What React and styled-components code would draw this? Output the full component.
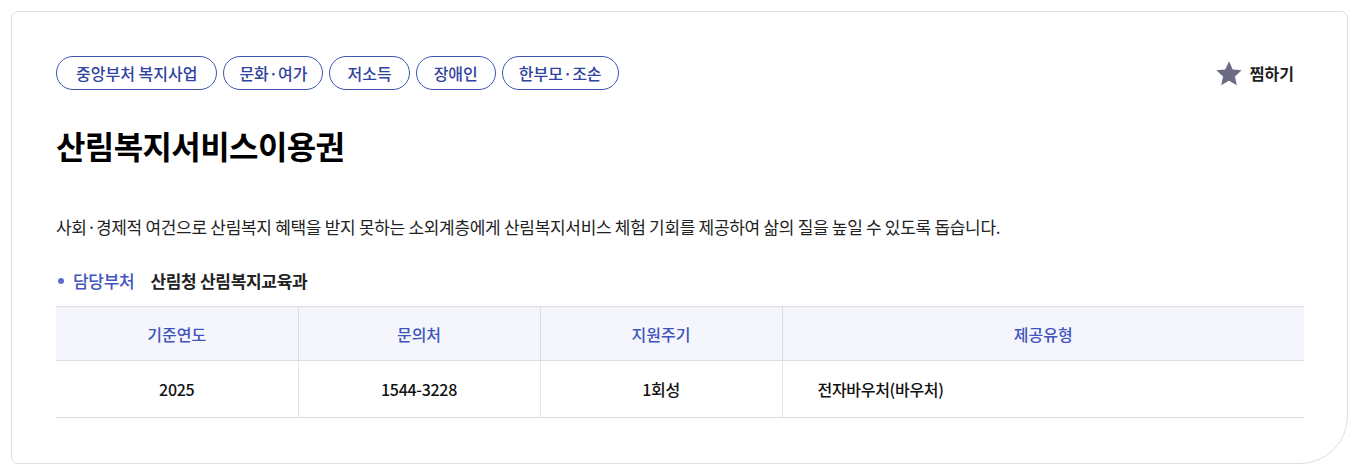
import React from "react"
import styled, { createGlobalStyle } from "styled-components"

const GlobalStyle = createGlobalStyle`
  html, body {
    margin: 0;
    padding: 0;
    background: #ffffff;
  }
  body {
    font-family: "Noto Sans CJK KR", "Noto Sans", sans-serif;
    color: #111111;
  }
`

const Page = styled.div`
  padding: 11px 14px 12px 11px;
`

const Card = styled.section`
  border: 1px solid #dedede;
  border-radius: 7px 7px 48px 7px;
  padding: 44px 43px 45px 44px;
  background: #fff;
`

const TopRow = styled.div`
  display: flex;
  justify-content: space-between;
  align-items: center;
`

const Tags = styled.ul`
  display: flex;
  gap: 6px;
  margin: 0;
  padding: 0;
  list-style: none;
`

const Tag = styled.li`
  height: 34px;
  box-sizing: border-box;
  display: flex;
  align-items: center;
  padding: 0 ${({ $pad }) => $pad || 17}px;
  border: 1px solid #3e55b3;
  border-radius: 17px;
  font-size: 16px;
  font-weight: 500;
  color: #2f43a0;
`

const Like = styled.button`
  display: flex;
  align-items: center;
  gap: 6px;
  border: 0;
  background: none;
  padding: 0;
  font-family: inherit;
  font-size: 16px;
  font-weight: 700;
  color: #222;
  margin-right: 10px;
  cursor: pointer;
`

const Title = styled.h2`
  margin: 33px 0 0;
  font-size: 32px;
  line-height: 44px;
  font-weight: 700;
  letter-spacing: -0.6px;
  color: #000;
`

const Desc = styled.p`
  margin: 47px 0 0;
  font-size: 17px;
  line-height: 26px;
  color: #222;
  letter-spacing: -0.3px;
`

const Dept = styled.div`
  display: flex;
  align-items: center;
  margin-top: 29px;
  font-size: 17px;
  line-height: 24px;
  letter-spacing: -0.3px;
`

const Dot = styled.span`
  width: 6px;
  height: 6px;
  border-radius: 50%;
  background: #5a6fcf;
  margin: 0 9px 0 2px;
`

const DeptLabel = styled.span`
  color: #3f55c0;
  font-weight: 500;
  margin-right: 16px;
`

const DeptValue = styled.span`
  color: #222;
  font-weight: 700;
`

const Table = styled.table`
  width: 100%;
  margin-top: 13px;
  border-collapse: collapse;
  table-layout: fixed;
  border-top: 1px solid #dcdde2;
  font-size: 16px;
`

const Th = styled.th`
  height: 53px;
  padding: 0;
  background: #f4f6fb;
  color: #4054c0;
  font-weight: 500;
  border-bottom: 1px solid #dcdde2;
  border-left: 1px solid #dcdde2;
  &:first-child {
    border-left: 0;
  }
`

const Td = styled.td`
  height: 56px;
  text-align: ${({ $left }) => ($left ? "left" : "center")};
  padding: ${({ $left }) => ($left ? "0 35px" : "0")};
  font-weight: 500;
  letter-spacing: -0.3px;
  color: #111;
  border-bottom: 1px solid #dcdde2;
  border-left: 1px solid #e4e4e8;
  &:first-child {
    border-left: 0;
  }
`

const tags = [
  { label: "중앙부처 복지사업", pad: 19 },
  { label: "문화·여가", pad: 15 },
  { label: "저소득", pad: 17 },
  { label: "장애인", pad: 17 },
  { label: "한부모·조손", pad: 16 },
]

export default function App() {
  return (
    <>
      <GlobalStyle />
      <Page>
        <Card>
          <TopRow>
            <Tags>
              {tags.map((t) => (
                <Tag key={t.label} $pad={t.pad}>
                  {t.label}
                </Tag>
              ))}
            </Tags>
            <Like>
              <svg width="30" height="29" viewBox="0 0 24 24">
                <path
                  d="M12 1.8l3.1 6.9 7.4.7-5.6 5 1.6 7.4L12 18l-6.5 3.8 1.6-7.4-5.6-5 7.4-.7z"
                  fill="#6b6c82"
                />
              </svg>
              찜하기
            </Like>
          </TopRow>
          <Title>산림복지서비스이용권</Title>
          <Desc>
            사회·경제적 여건으로 산림복지 혜택을 받지 못하는 소외계층에게 산림복지서비스 체험 기회를 제공하여 삶의 질을 높일 수 있도록 돕습니다.
          </Desc>
          <Dept>
            <Dot />
            <DeptLabel>담당부처</DeptLabel>
            <DeptValue>산림청 산림복지교육과</DeptValue>
          </Dept>
          <Table>
            <colgroup>
              <col style={{ width: "242px" }} />
              <col style={{ width: "242px" }} />
              <col style={{ width: "242px" }} />
              <col />
            </colgroup>
            <thead>
              <tr>
                <Th>기준연도</Th>
                <Th>문의처</Th>
                <Th>지원주기</Th>
                <Th>제공유형</Th>
              </tr>
            </thead>
            <tbody>
              <tr>
                <Td>2025</Td>
                <Td>1544-3228</Td>
                <Td>1회성</Td>
                <Td $left>전자바우처(바우처)</Td>
              </tr>
            </tbody>
          </Table>
        </Card>
      </Page>
    </>
  )
}
